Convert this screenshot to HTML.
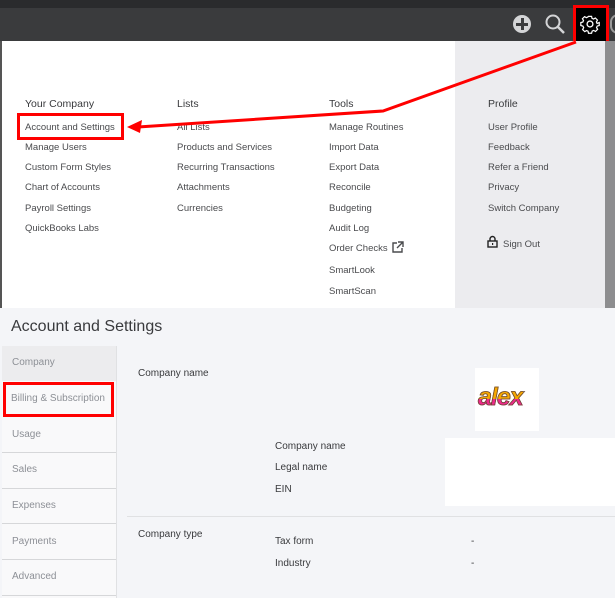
<!DOCTYPE html>
<html><head><meta charset="utf-8"><style>
*{margin:0;padding:0;box-sizing:border-box}
body{width:615px;height:598px;overflow:hidden;position:relative;background:#f4f5f8;font-family:"Liberation Sans",sans-serif;color:#393a3d}
.a{position:absolute;white-space:nowrap}
.m{font-size:9.5px;color:#4a4b4e}
.h{font-size:10.5px;color:#393a3d}
.s{font-size:10px;color:#8d9096}
</style></head><body>
<div class="a" style="left:0;top:0;width:615px;height:8px;background:#2a2b2d"></div>
<div class="a" style="left:0;top:8px;width:615px;height:33px;background:#3a3b3d"></div>
<div class="a" style="left:513px;top:15px;width:18px;height:18px;border-radius:50%;background:#d4d5d7"></div>
<div class="a" style="left:516px;top:22.5px;width:12px;height:3px;background:#3a3b3d"></div>
<div class="a" style="left:520.5px;top:18px;width:3px;height:12px;background:#3a3b3d"></div>
<svg class="a" style="left:544px;top:13px" width="22" height="22"><circle cx="9" cy="9" r="6.5" fill="none" stroke="#d4d5d7" stroke-width="2"/><line x1="13.5" y1="13.5" x2="20" y2="20" stroke="#d4d5d7" stroke-width="2.5"/></svg>
<div class="a" style="left:573px;top:5px;width:36px;height:40px;background:#000;border:3px solid #f00"></div>
<svg class="a" style="left:580px;top:14px" width="20" height="20" viewBox="0 0 24 24"><path d="M10 2h4l.6 2.6 2 .9 2.3-1.4 2.8 2.8-1.4 2.3.9 2L24 10v4l-2.6.6-.9 2 1.4 2.3-2.8 2.8-2.3-1.4-2 .9L14 24h-4l-.6-2.6-2-.9-2.3 1.4-2.8-2.8 1.4-2.3-.9-2L0 14v-4l2.6-.6.9-2L2.1 5.1 4.9 2.3l2.3 1.4 2-.9z" fill="none" stroke="#fff" stroke-width="1.6" transform="translate(1 1) scale(.92)"/><circle cx="12" cy="12" r="3.5" fill="none" stroke="#fff" stroke-width="1.6"/></svg>
<div class="a" style="left:610px;top:14px;width:8px;height:20px;border:2px solid #999;border-right:none;border-radius:10px 0 0 10px"></div>
<div class="a" style="left:0;top:41px;width:2px;height:267px;background:#555"></div>
<div class="a" style="left:2px;top:41px;width:453px;height:267px;background:#fff"></div>
<div class="a" style="left:455px;top:41px;width:150px;height:267px;background:#ececef"></div>
<div class="a" style="left:605px;top:41px;width:10px;height:267px;background:#8d8d8f"></div>
<div class="a h" style="left:25px;top:98px">Your Company</div>
<div class="a m" style="left:25px;top:122px">Account and Settings</div>
<div class="a m" style="left:25px;top:142px">Manage Users</div>
<div class="a m" style="left:25px;top:162px">Custom Form Styles</div>
<div class="a m" style="left:25px;top:182px">Chart of Accounts</div>
<div class="a m" style="left:25px;top:203px">Payroll Settings</div>
<div class="a m" style="left:25px;top:223px">QuickBooks Labs</div>
<div class="a h" style="left:177px;top:98px">Lists</div>
<div class="a m" style="left:177px;top:122px">All Lists</div>
<div class="a m" style="left:177px;top:142px">Products and Services</div>
<div class="a m" style="left:177px;top:162px">Recurring Transactions</div>
<div class="a m" style="left:177px;top:182px">Attachments</div>
<div class="a m" style="left:177px;top:203px">Currencies</div>
<div class="a h" style="left:329px;top:98px">Tools</div>
<div class="a m" style="left:329px;top:122px">Manage Routines</div>
<div class="a m" style="left:329px;top:142px">Import Data</div>
<div class="a m" style="left:329px;top:162px">Export Data</div>
<div class="a m" style="left:329px;top:182px">Reconcile</div>
<div class="a m" style="left:329px;top:203px">Budgeting</div>
<div class="a m" style="left:329px;top:223px">Audit Log</div>
<div class="a m" style="left:329px;top:243px">Order Checks</div>
<svg class="a" style="left:391px;top:241px" width="13" height="13"><path d="M6 2H2v9h9V7M7 1h5v5M12 1L6 7" fill="none" stroke="#4a4b4e" stroke-width="1.4"/></svg>
<div class="a m" style="left:329px;top:265px">SmartLook</div>
<div class="a m" style="left:329px;top:286px">SmartScan</div>
<div class="a h" style="left:488px;top:98px">Profile</div>
<div class="a m" style="left:488px;top:122px">User Profile</div>
<div class="a m" style="left:488px;top:142px">Feedback</div>
<div class="a m" style="left:488px;top:162px">Refer a Friend</div>
<div class="a m" style="left:488px;top:182px">Privacy</div>
<div class="a m" style="left:488px;top:203px">Switch Company</div>
<svg class="a" style="left:487px;top:235px" width="11" height="13"><path d="M3 6V4a2.5 2.5 0 0 1 5 0v2" fill="none" stroke="#222" stroke-width="1.4"/><rect x="1" y="6" width="9" height="6" fill="none" stroke="#222" stroke-width="1.4"/><rect x="5" y="8" width="1.2" height="2" fill="#222"/></svg>
<div class="a m" style="left:503px;top:239px">Sign Out</div>
<div class="a" style="left:17px;top:113px;width:107px;height:27px;border:3px solid #f00"></div>
<svg class="a" style="left:0;top:0" width="615" height="140"><polyline points="576,42 383,111 138,127" fill="none" stroke="#f00" stroke-width="3"/><polygon points="127,127 142,120 140,133" fill="#f00"/></svg>
<div class="a" style="left:11px;top:318px;font-size:16px;color:#393a3d">Account and Settings</div>
<div class="a" style="left:2px;top:346px;width:115px;height:252px;background:#f9f9fa;border-right:1px solid #e0e1e3"></div>
<div class="a" style="left:2px;top:346px;width:114px;height:35px;background:#ececee"></div>
<div class="a s" style="left:12px;top:357px">Company</div>
<div class="a s" style="left:11px;top:393px">Billing &amp; Subscription</div>
<div class="a" style="left:3px;top:382px;width:111px;height:35px;border:3px solid #f00"></div>
<div class="a" style="left:2px;top:452px;width:114px;height:1px;background:#d6d7d9"></div>
<div class="a s" style="left:12px;top:429px">Usage</div>
<div class="a" style="left:2px;top:488px;width:114px;height:1px;background:#d6d7d9"></div>
<div class="a s" style="left:12px;top:464px">Sales</div>
<div class="a" style="left:2px;top:523px;width:114px;height:1px;background:#d6d7d9"></div>
<div class="a s" style="left:12px;top:500px">Expenses</div>
<div class="a" style="left:2px;top:559px;width:114px;height:1px;background:#d6d7d9"></div>
<div class="a s" style="left:12px;top:536px">Payments</div>
<div class="a" style="left:2px;top:595px;width:114px;height:1px;background:#d6d7d9"></div>
<div class="a s" style="left:12px;top:571px">Advanced</div>
<div class="a" style="left:138px;top:368px;font-size:10px">Company name</div>
<div class="a" style="left:475px;top:368px;width:64px;height:63px;background:#fff"></div>
<div class="a" style="left:478px;top:383px;font-size:25px;font-weight:bold;font-style:italic;letter-spacing:-1px;color:transparent;background:linear-gradient(#f7a800 0,#f7a800 55%,#f0288c 55%);-webkit-background-clip:text;background-clip:text;-webkit-text-stroke:0.8px #6b4a36">alex</div>
<div class="a" style="left:445px;top:438px;width:170px;height:68px;background:#fff"></div>
<div class="a" style="left:275px;top:441px;font-size:10px">Company name</div>
<div class="a" style="left:275px;top:462px;font-size:10px">Legal name</div>
<div class="a" style="left:275px;top:484px;font-size:10px">EIN</div>
<div class="a" style="left:127px;top:516px;width:488px;height:1px;background:#e0e1e3"></div>
<div class="a" style="left:138px;top:529px;font-size:10px">Company type</div>
<div class="a" style="left:275px;top:536px;font-size:10px">Tax form</div>
<div class="a" style="left:275px;top:558px;font-size:10px">Industry</div>
<div class="a" style="left:471px;top:536px;font-size:10px">-</div>
<div class="a" style="left:471px;top:558px;font-size:10px">-</div>
</body></html>
